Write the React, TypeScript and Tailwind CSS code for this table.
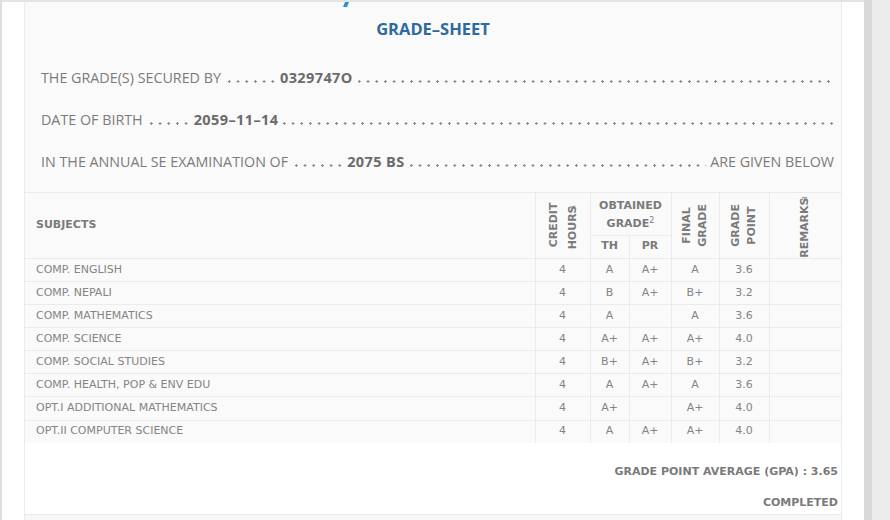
import React from "react";

type Row = [string, string, string, string, string, string];

const rows: Row[] = [
  ["COMP. ENGLISH", "4", "A", "A+", "A", "3.6"],
  ["COMP. NEPALI", "4", "B", "A+", "B+", "3.2"],
  ["COMP. MATHEMATICS", "4", "A", "", "A", "3.6"],
  ["COMP. SCIENCE", "4", "A+", "A+", "A+", "4.0"],
  ["COMP. SOCIAL STUDIES", "4", "B+", "A+", "B+", "3.2"],
  ["COMP. HEALTH, POP & ENV EDU", "4", "A", "A+", "A", "3.6"],
  ["OPT.I ADDITIONAL MATHEMATICS", "4", "A+", "", "A+", "4.0"],
  ["OPT.II COMPUTER SCIENCE", "4", "A", "A+", "A+", "4.0"],
];

// dotted leader drawn as a repeating background
function Leader({ w }: { w?: string }) {
  return (
    <span
      className={`${w ?? "flex-1"} self-end mb-[5px] h-[3px] bg-[radial-gradient(circle,#858585_1px,transparent_1.4px)] bg-[length:8.7px_3px] bg-repeat-x`}
    />
  );
}

function InfoLine({ label, dots, value, tail }: { label: string; dots: string; value: string; tail?: string }) {
  return (
    <div className="flex h-[20px] leading-[20px]">
      <span className="whitespace-nowrap">{label}</span>
      <span className="w-[4px]" />
      <Leader w={dots} />
      <span className="font-bold text-[14.5px] tracking-[0.4px] text-[#6b6b6b] whitespace-nowrap ml-[3px] mr-[2px]">{value}</span>
      <Leader />
      {tail && <span className="whitespace-nowrap ml-[4px]">{tail}</span>}
    </div>
  );
}

function Vert({ children, lh }: { children: React.ReactNode; lh: string }) {
  return (
    <div className={`inline-block align-middle [writing-mode:vertical-rl] rotate-180 text-center ${lh}`}>{children}</div>
  );
}

const th = "border-b border-r border-[#ebebeb] font-bold text-[#7a7a7a] align-middle text-center";
const td = "border-b border-r border-[#ebebeb] text-center text-[#848484]";

export default function App() {
  return (
    <div className="flex min-h-[520px] bg-white font-['Open_Sans',sans-serif]">
      <div className="w-[2px] bg-[#dddddd]" />
      <div className="w-[862px] border-t-2 border-[#e4e4e4] flex">
        <div className="w-[22px]" />
        <div className="relative w-[818px] border-x border-[#ebebeb] bg-[#fafafa] flex flex-col">
          <svg className="absolute left-[318px] top-0" width="6" height="5" viewBox="0 0 6 5">
            <polygon points="2,0 6,0 4,5 0,5" fill="#2b94cf" />
          </svg>
          <h1 className="pt-[16px] text-center text-[16.5px] leading-[22px] font-bold text-[#2e6aa0]">GRADE–SHEET</h1>
          <div className="mt-[28px] pl-[16px] pr-[7px] flex flex-col gap-[22px] text-[14.3px] text-[#7b7b7b]">
            <InfoLine label="THE GRADE(S) SECURED BY" dots="w-[52px]" value="0329747O" />
            <InfoLine label="DATE OF BIRTH" dots="w-[44px]" value="2059–11–14" />
            <InfoLine label="IN THE ANNUAL SE EXAMINATION OF" dots="w-[52px]" value="2075 BS" tail="ARE GIVEN BELOW" />
          </div>
          <table className="mt-[20px] table-fixed border-collapse border-t border-[#ebebeb] w-[816px] font-['DejaVu_Sans',sans-serif] text-[11px]">
            <colgroup>
              <col className="w-[510px]" />
              <col className="w-[55px]" />
              <col className="w-[39px]" />
              <col className="w-[42px]" />
              <col className="w-[48px]" />
              <col className="w-[50px]" />
              <col className="w-[72px]" />
            </colgroup>
            <thead>
              <tr className="h-[42px]">
                <th rowSpan={2} className={`${th} !text-left pl-[11px]`}>SUBJECTS</th>
                <th rowSpan={2} className={th}>
                  <Vert lh="leading-[19px]">
                    CREDIT<br />HOURS<sup className="text-[7px] font-normal">1</sup>
                  </Vert>
                </th>
                <th colSpan={2} className={`${th} leading-[18px] pt-[2px]`}>
                  OBTAINED<br />GRADE<sup className="text-[8px] font-normal">2</sup>
                </th>
                <th rowSpan={2} className={th}>
                  <Vert lh="leading-[16px]">FINAL<br />GRADE</Vert>
                </th>
                <th rowSpan={2} className={th}>
                  <Vert lh="leading-[16px]">GRADE<br />POINT</Vert>
                </th>
                <th rowSpan={2} className={`${th} border-r-0`}>
                  <Vert lh="leading-[16px]">
                    REMARKS<sup className="text-[7px] font-normal">3</sup>
                  </Vert>
                </th>
              </tr>
              <tr className="h-[23px]">
                <th className={th}>TH</th>
                <th className={th}>PR</th>
              </tr>
            </thead>
            <tbody>
              {rows.map((r) => (
                <tr key={r[0]} className="h-[23px]">
                  <td className={`${td} !text-left pl-[11px]`}>{r[0]}</td>
                  <td className={td}>{r[1]}</td>
                  <td className={td}>{r[2]}</td>
                  <td className={td}>{r[3]}</td>
                  <td className={td}>{r[4]}</td>
                  <td className={td}>{r[5]}</td>
                  <td className={`${td} border-r-0`}></td>
                </tr>
              ))}
            </tbody>
          </table>
          <div className="bg-white flex flex-col items-end pr-[3px] pt-[21px] pb-[3px] font-['DejaVu_Sans',sans-serif] font-bold text-[11px] leading-[16px] text-[#7a7a7a]">
            <div>GRADE POINT AVERAGE (GPA) : 3.65</div>
            <div className="mt-[15px]">COMPLETED</div>
          </div>
          <div className="flex-1 border-t border-[#ebebeb] bg-[#f7f7f7]" />
        </div>
        <div className="w-[22px]" />
      </div>
      <div className="w-[8px] bg-[#d9d9d9]" />
      <div className="flex-1 bg-[#ebebeb]" />
    </div>
  );
}
